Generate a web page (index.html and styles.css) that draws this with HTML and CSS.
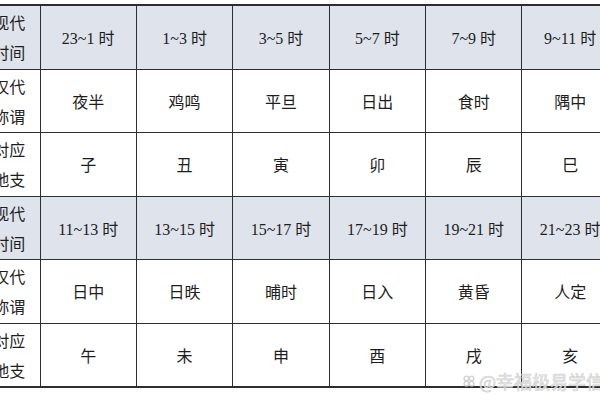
FILE: index.html
```html
<!DOCTYPE html>
<html lang="zh">
<head>
<meta charset="utf-8">
<link rel="stylesheet" href="styles.css">
</head>
<body>
<div class="page">
<table class="tbl">
  <colgroup>
    <col class="c0"><col class="c"><col class="c"><col class="c"><col class="c"><col class="c"><col class="c">
  </colgroup>
  <tr class="head">
    <td class="lab">现代<br>时间</td><td>23~1 时</td><td>1~3 时</td><td>3~5 时</td><td>5~7 时</td><td>7~9 时</td><td>9~11 时</td>
  </tr>
  <tr>
    <td class="lab">汉代<br>称谓</td><td>夜半</td><td>鸡鸣</td><td>平旦</td><td>日出</td><td>食时</td><td>隅中</td>
  </tr>
  <tr>
    <td class="lab">对应<br>地支</td><td>子</td><td>丑</td><td>寅</td><td>卯</td><td>辰</td><td>巳</td>
  </tr>
  <tr class="head">
    <td class="lab">现代<br>时间</td><td>11~13 时</td><td>13~15 时</td><td>15~17 时</td><td>17~19 时</td><td>19~21 时</td><td>21~23 时</td>
  </tr>
  <tr>
    <td class="lab">汉代<br>称谓</td><td>日中</td><td>日昳</td><td>晡时</td><td>日入</td><td>黄昏</td><td>人定</td>
  </tr>
  <tr>
    <td class="lab">对应<br>地支</td><td>午</td><td>未</td><td>申</td><td>酉</td><td>戌</td><td>亥</td>
  </tr>
</table>
<div class="wm"><svg class="wm-ico" width="14" height="14" viewBox="0 0 16 16"><g fill="none" stroke="#d2d2d2" stroke-width="1.6"><circle cx="5" cy="5" r="2.6"/><circle cx="11" cy="5" r="2.6"/><circle cx="5" cy="11" r="2.6"/><circle cx="11" cy="11" r="2.6"/></g></svg><span>@幸福极易学信息</span></div>
</div>
</body>
</html>
```
FILE: styles.css
```css
html, body {
  margin: 0;
  padding: 0;
  background: #ffffff;
}
.page {
  position: relative;
  width: 600px;
  height: 400px;
  overflow: hidden;
}
.tbl {
  border-collapse: collapse;
  table-layout: fixed;
  width: 640px;
  margin-top: 4px;
  margin-left: -22px;
  font-family: "Liberation Serif", "Noto Sans CJK SC", serif;
  font-size: 16px;
  color: #1e1e1e;
}
.c0 { width: 61.5px; }
.c { width: 96.4px; }
.tbl td {
  border: 1px solid #2e2e2e;
  height: 62.5px;
  padding: 0;
  text-align: center;
  vertical-align: middle;
}
.tbl tr:first-child td { border-top-width: 2px; }
.tbl tr:last-child td { border-bottom-width: 2px; }
.tbl td.lab {
  font-family: "Noto Sans CJK SC", sans-serif;
  line-height: 30px;
}
.head td { background: #dfe3ec; }
.wm {
  position: absolute;
  left: 462px;
  top: 368px;
  display: flex;
  align-items: center;
  gap: 3px;
  font-family: "Noto Sans CJK SC", sans-serif;
  font-size: 18px;
  font-weight: 400;
  color: rgba(235, 235, 235, 0.85);
  white-space: nowrap;
  -webkit-text-stroke: 0.7px rgba(200, 200, 200, 0.8);
}
```
